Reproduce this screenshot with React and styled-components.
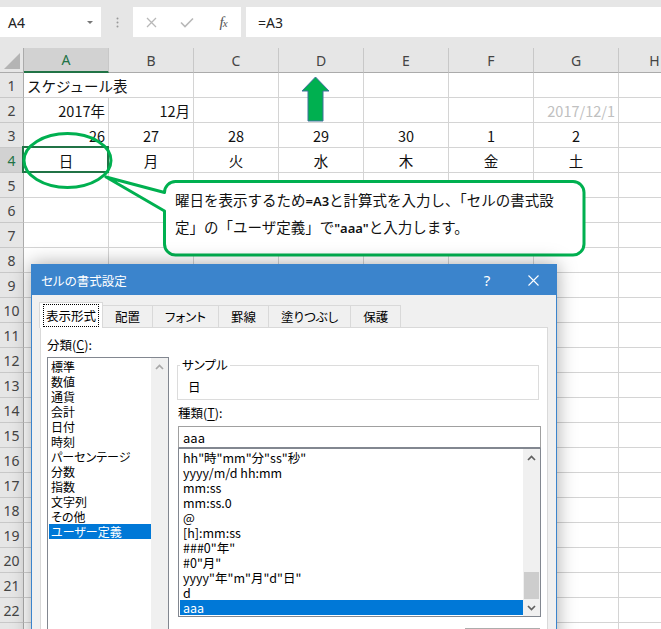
import React from 'react';
import styled, { createGlobalStyle, css } from 'styled-components';

const JP = `"Noto Sans CJK JP", "Noto Sans", sans-serif`;
const UI = `"Noto Sans", "Noto Sans CJK JP", sans-serif`;
const GREEN = '#00b050';

const GlobalStyle = createGlobalStyle`
  html, body { margin: 0; padding: 0; background: #fff; }
  body { overflow: hidden; }
  * { box-sizing: border-box; }
`;

const Page = styled.div`
  position: relative;
  width: 661px;
  height: 629px;
  overflow: hidden;
  background: #fff;
  font-family: ${JP};
`;

/* ---------- formula bar ---------- */
const FormulaBar = styled.div`
  display: flex;
  align-items: flex-start;
  height: 48px;
  padding-top: 7px;
  background: #e6e6e6;
`;

const NameBox = styled.div`
  display: flex;
  align-items: center;
  justify-content: space-between;
  width: 101px;
  height: 30px;
  padding: 0 8px 0 8px;
  background: #fff;
  font-family: ${UI};
  font-size: 14px;
  color: #222;
`;

const Caret = styled.span`
  width: 0;
  height: 0;
  border-left: 3px solid transparent;
  border-right: 3px solid transparent;
  border-top: 3px solid #777;
`;

const Grip = styled.div`
  display: flex;
  justify-content: center;
  align-items: center;
  width: 32px;
  height: 30px;
`;

const FxButtons = styled.div`
  display: grid;
  grid-template-columns: repeat(3, 36px);
  align-items: center;
  justify-items: center;
  width: 108px;
  height: 30px;
  background: #fff;
`;

const Fx = styled.span`
  font-family: "Liberation Serif", serif;
  font-style: italic;
  color: #555;
  font-size: 15px;
  letter-spacing: -1px;
  small { font-size: 11px; }
`;

const FormulaInput = styled.div`
  flex: 1;
  display: flex;
  align-items: center;
  height: 30px;
  margin-left: 5px;
  padding-left: 12px;
  background: #fff;
  font-family: ${UI};
  font-size: 14px;
  color: #222;
`;

/* ---------- sheet ---------- */
const Sheet = styled.div`
  display: grid;
  grid-template-columns: 24px repeat(7, 85px) 72px;
  grid-auto-rows: 25px;
  width: 691px;
`;

const Corner = styled.div`
  display: flex;
  align-items: flex-end;
  justify-content: flex-end;
  padding: 0 3px 3px 0;
  background: #e6e6e6;
  border-right: 1px solid #ababab;
  border-bottom: 1px solid #ababab;
`;

const ColHead = styled.div`
  display: flex;
  align-items: center;
  justify-content: center;
  background: #e6e6e6;
  border-right: 1px solid #c8c8c8;
  border-bottom: 1px solid #ababab;
  font-family: ${UI};
  font-size: 14px;
  color: #444;
  ${p => p.$active && css`
    background: #d2d2d2;
    border-bottom: 2px solid #217346;
    color: #217346;
  `}
`;

const RowHead = styled.div`
  display: flex;
  align-items: center;
  justify-content: center;
  background: #e6e6e6;
  border-right: 1px solid #ababab;
  border-bottom: 1px solid #c8c8c8;
  font-family: ${UI};
  font-size: 14px;
  color: #444;
  ${p => p.$active && css`
    background: #d2d2d2;
    color: #217346;
  `}
`;

const Cell = styled.div`
  position: relative;
  display: flex;
  align-items: center;
  justify-content: ${p => (p.$align === 'right' ? 'flex-end' : p.$align === 'center' ? 'center' : 'flex-start')};
  padding: 0 3px 0 3px;
  grid-column: span ${p => p.$span || 1};
  border-right: 1px solid #d4d4d4;
  border-bottom: 1px solid #d4d4d4;
  white-space: nowrap;
  font-size: 14.5px;
  color: ${p => (p.$muted ? '#c0c0c0' : '#111')};
  ${p => p.$selected && css`
    &::after {
      content: '';
      position: absolute;
      left: -2px;
      top: -2px;
      right: -1px;
      bottom: -1px;
      border: 2px solid #217346;
    }
  `}
`;

/* ---------- annotations ---------- */
const Ring = styled.svg`
  position: absolute;
  left: 20px;
  top: 130px;
`;

const UpArrow = styled.svg`
  position: absolute;
  left: 300px;
  top: 75px;
`;

const Callout = styled.div`
  position: absolute;
  left: 163px;
  top: 180px;
  width: 423px;
  height: 77px;
  padding: 7px 0 0 12px;
`;

const CalloutShape = styled.svg`
  position: absolute;
  left: -60px;
  top: -6px;
  overflow: visible;
`;

const CalloutText = styled.p`
  position: relative;
  margin: 0;
  font-size: 14.5px;
  line-height: 26px;
  color: #111;
  white-space: nowrap;
`;

const Latin = styled.span`
  font-family: "Noto Sans", sans-serif;
  font-weight: 600;
  font-size: 13px;
`;

/* ---------- dialog ---------- */
const Dialog = styled.div`
  position: absolute;
  left: 31px;
  top: 264px;
  width: 526px;
  height: 400px;
  display: flex;
  flex-direction: column;
  background: #f0f0f0;
  border: 1px solid #3b84cc;
  box-shadow: 0 0 18px rgba(0, 0, 0, 0.35);
  font-family: ${JP};
  font-feature-settings: "palt";
  color: #000;
`;

const TitleBar = styled.div`
  display: flex;
  align-items: center;
  justify-content: space-between;
  height: 30px;
  padding-left: 9px;
  background: #3b84cc;
  color: #fff;
  font-size: 12.5px;
`;

const Caption = styled.div`
  display: flex;
  height: 100%;
`;

const CaptionButton = styled.div`
  display: flex;
  align-items: center;
  justify-content: center;
  width: 46px;
  font-family: ${UI};
  font-size: 15px;
`;

const DialogBody = styled.div`
  flex: 1;
  display: flex;
  flex-direction: column;
  padding: 0 8px;
`;

const Tabs = styled.div`
  display: flex;
  align-items: flex-end;
  height: 32px;
`;

const Tab = styled.div`
  display: flex;
  align-items: center;
  height: 22px;
  margin-left: -1px;
  padding: 0 12px;
  background: #f0f0f0;
  border: 1px solid #d9d9d9;
  border-bottom: none;
  font-size: 12.5px;
  ${p => p.$active && css`
    position: relative;
    z-index: 1;
    height: 26px;
    margin-bottom: -1px;
    padding: 0 3px 0 3px;
    background: #fff;
  `}
`;

const FocusLabel = styled.span`
  padding: 1px 2px;
  border: 1px dotted #000;
`;

const Panel = styled.div`
  flex: 1;
  display: grid;
  grid-template-columns: 122px 364px;
  column-gap: 8px;
  align-content: start;
  padding: 9px 0 0 6px;
  background: #fff;
  border: 1px solid #d9d9d9;
`;

const Column = styled.div`
  display: flex;
  flex-direction: column;
`;

const Label = styled.div`
  margin: ${p => p.$mt || 0}px 0 0 ${p => p.$ml || 0}px;
  font-size: 12.5px;
  line-height: 16px;
  u { text-decoration: underline; text-underline-offset: 2px; }
`;

const ListBox = styled.div`
  display: flex;
  width: ${p => (p.$w ? `${p.$w}px` : 'auto')};
  height: ${p => p.$h}px;
  margin-top: ${p => p.$mt || 0}px;
  margin-left: ${p => p.$ml || 0}px;
  background: #fff;
  border: 1px solid #828790;
`;

const Items = styled.div`
  flex: 1;
  padding: 1px 0 0 1px;
`;

const Item = styled.div`
  height: 15px;
  padding-left: ${p => p.$pl}px;
  font-size: ${p => p.$fs}px;
  line-height: 15px;
  white-space: nowrap;
  ${p => p.$selected && css`
    background: #0078d7;
    color: #fff;
  `}
`;

const Track = styled.div`
  display: flex;
  flex-direction: column;
  width: 17px;
  background: #f0f0f0;
`;

const TrackButton = styled.div`
  display: flex;
  align-items: center;
  justify-content: center;
  height: 17px;
`;

const TrackGap = styled.div`
  flex: 1;
`;

const Thumb = styled.div`
  height: 27px;
  margin: 0 1px;
  background: #cdcdcd;
`;

const GroupBox = styled.fieldset`
  width: 362px;
  margin: 20px 0 0 0;
  padding: 6px 10px 4px 10px;
  border: 1px solid #dcdcdc;
  font-size: 12.5px;
  line-height: 16px;
  legend {
    margin-left: -8px;
    padding: 0 2px;
  }
`;

const TextInput = styled.div`
  display: flex;
  align-items: center;
  width: 363px;
  height: 22px;
  margin: 5px 0 0 1px;
  padding-left: 4px;
  border: 1px solid #a0a0a0;
  border-bottom-color: #828790;
  font-size: 13px;
`;

const SideButton = styled.div`
  align-self: flex-end;
  display: flex;
  align-items: center;
  justify-content: center;
  width: 75px;
  height: 23px;
  margin: 11px 1px 0 0;
  background: #e1e1e1;
  border: 1px solid #adadad;
  font-size: 12.5px;
`;

function Chevron({ down, color = '#606060' }) {
  return (
    <svg width="9" height="6" viewBox="0 0 9 6">
      <polyline
        points={down ? '1,1 4.5,4.5 8,1' : '1,5 4.5,1.5 8,5'}
        fill="none"
        stroke={color}
        strokeWidth="1.7"
      />
    </svg>
  );
}

const COLS = ['A', 'B', 'C', 'D', 'E', 'F', 'G', 'H'];
const ROWS = Array.from({ length: 23 }, (_, i) => i + 1);

const CELLS = {
  '1-0': { t: 'スケジュール表', a: 'left', span: 2 },
  '2-0': { t: '2017年', a: 'right' },
  '2-1': { t: '12月', a: 'right' },
  '2-6': { t: '2017/12/1', a: 'right', muted: true },
  '3-0': { t: '26', a: 'right' },
  '3-1': { t: '27' }, '3-2': { t: '28' }, '3-3': { t: '29' },
  '3-4': { t: '30' }, '3-5': { t: '1' }, '3-6': { t: '2' },
  '4-0': { t: '日' }, '4-1': { t: '月' }, '4-2': { t: '火' }, '4-3': { t: '水' },
  '4-4': { t: '木' }, '4-5': { t: '金' }, '4-6': { t: '土' },
};

const CATEGORIES = ['標準', '数値', '通貨', '会計', '日付', '時刻', 'パーセンテージ', '分数', '指数', '文字列', 'その他', 'ユーザー定義'];
const FORMATS = ['hh"時"mm"分"ss"秒"', 'yyyy/m/d hh:mm', 'mm:ss', 'mm:ss.0', '@', '[h]:mm:ss', '###0"年"', '#0"月"', 'yyyy"年"m"月"d"日"', 'd', 'aaa'];
const TABS = ['表示形式', '配置', 'フォント', '罫線', '塗りつぶし', '保護'];

export default function App() {
  return (
    <Page>
      <GlobalStyle />

      <FormulaBar>
        <NameBox>
          A4
          <Caret />
        </NameBox>
        <Grip>
          <svg width="3" height="11" viewBox="0 0 3 11">
            <circle cx="1.5" cy="1.5" r="1" fill="#999" />
            <circle cx="1.5" cy="5.5" r="1" fill="#999" />
            <circle cx="1.5" cy="9.5" r="1" fill="#999" />
          </svg>
        </Grip>
        <FxButtons>
          <svg width="11" height="11" viewBox="0 0 11 11">
            <path d="M1 1 L10 10 M10 1 L1 10" stroke="#b8b8b8" strokeWidth="1.3" />
          </svg>
          <svg width="14" height="11" viewBox="0 0 14 11">
            <polyline points="1,5.5 5,9.5 13,1.5" fill="none" stroke="#b8b8b8" strokeWidth="1.6" />
          </svg>
          <Fx>f<small>x</small></Fx>
        </FxButtons>
        <FormulaInput>=A3</FormulaInput>
      </FormulaBar>

      <Sheet>
        <Corner>
          <svg width="16" height="16" viewBox="0 0 16 16">
            <polygon points="16,0 16,16 0,16" fill="#b4b4b4" />
          </svg>
        </Corner>
        {COLS.map(c => (
          <ColHead key={c} $active={c === 'A'}>{c}</ColHead>
        ))}
        {ROWS.map(r => (
          <React.Fragment key={r}>
            <RowHead $active={r === 4}>{r}</RowHead>
            {COLS.map((c, i) => {
              if (r === 1 && i === 1) return null;
              const cell = CELLS[`${r}-${i}`] || {};
              return (
                <Cell
                  key={c}
                  $align={cell.a || 'center'}
                  $span={cell.span}
                  $muted={cell.muted}
                  $selected={r === 4 && i === 0}
                >
                  {cell.t}
                </Cell>
              );
            })}
          </React.Fragment>
        ))}
      </Sheet>

      <UpArrow width="32" height="48" viewBox="0 0 32 48">
        <polygon
          points="15.5,2 29,16 23,16 23,46 8,46 8,16 2,16"
          fill={GREEN}
          stroke="#41719c"
          strokeWidth="1"
        />
      </UpArrow>

      <Ring width="96" height="62" viewBox="0 0 96 62">
        <ellipse cx="47.5" cy="30.5" rx="43.5" ry="27" fill="none" stroke={GREEN} strokeWidth="3" />
      </Ring>

      <Callout>
        <CalloutShape width="484" height="84" viewBox="-60 -6 484 84">
          <path
            d="M12.5 1.5 H410 A11 11 0 0 1 421 12.5 V64 A11 11 0 0 1 410 75 H12.5 A11 11 0 0 1 1.5 64 V31 L-57 -3 L1.5 12.5 A11 11 0 0 1 12.5 1.5 Z"
            fill="#fff"
            stroke={GREEN}
            strokeWidth="3"
            strokeLinejoin="round"
          />
        </CalloutShape>
        <CalloutText>
          曜日を表示するため<Latin>=A3</Latin>と計算式を入力し、「セルの書式設
          <br />
          定」の「ユーザ定義」で<Latin>"aaa"</Latin>と入力します。
        </CalloutText>
      </Callout>

      <Dialog>
        <TitleBar>
          セルの書式設定
          <Caption>
            <CaptionButton>?</CaptionButton>
            <CaptionButton>
              <svg width="11" height="11" viewBox="0 0 11 11">
                <path d="M0.5 0.5 L10.5 10.5 M10.5 0.5 L0.5 10.5" stroke="#fff" strokeWidth="1.1" />
              </svg>
            </CaptionButton>
          </Caption>
        </TitleBar>
        <DialogBody>
          <Tabs>
            {TABS.map((t, i) => (
              <Tab key={t} $active={i === 0}>
                {i === 0 ? <FocusLabel>{t}</FocusLabel> : t}
              </Tab>
            ))}
          </Tabs>
          <Panel>
            <Column>
              <Label>分類(<u>C</u>):</Label>
              <ListBox $h={290} $mt={4}>
                <Items>
                  {CATEGORIES.map(c => (
                    <Item key={c} $pl={2} $fs={12} $selected={c === 'ユーザー定義'}>{c}</Item>
                  ))}
                </Items>
                <Track>
                  <TrackButton><Chevron color="#a8a8a8" /></TrackButton>
                  <TrackGap />
                </Track>
              </ListBox>
            </Column>
            <Column>
              <GroupBox>
                <legend>サンプル</legend>
                日
              </GroupBox>
              <Label $mt={5} $ml={1}>種類(<u>T</u>):</Label>
              <TextInput>aaa</TextInput>
              <ListBox $h={169} $ml={1} $w={363}>
                <Items>
                  {FORMATS.map(f => (
                    <Item key={f} $pl={3} $fs={12.5} $selected={f === 'aaa'}>{f}</Item>
                  ))}
                </Items>
                <Track>
                  <TrackButton><Chevron /></TrackButton>
                  <TrackGap />
                  <Thumb />
                  <TrackButton><Chevron down /></TrackButton>
                </Track>
              </ListBox>
              <SideButton>削除(<u>D</u>)</SideButton>
            </Column>
          </Panel>
        </DialogBody>
      </Dialog>
    </Page>
  );
}
